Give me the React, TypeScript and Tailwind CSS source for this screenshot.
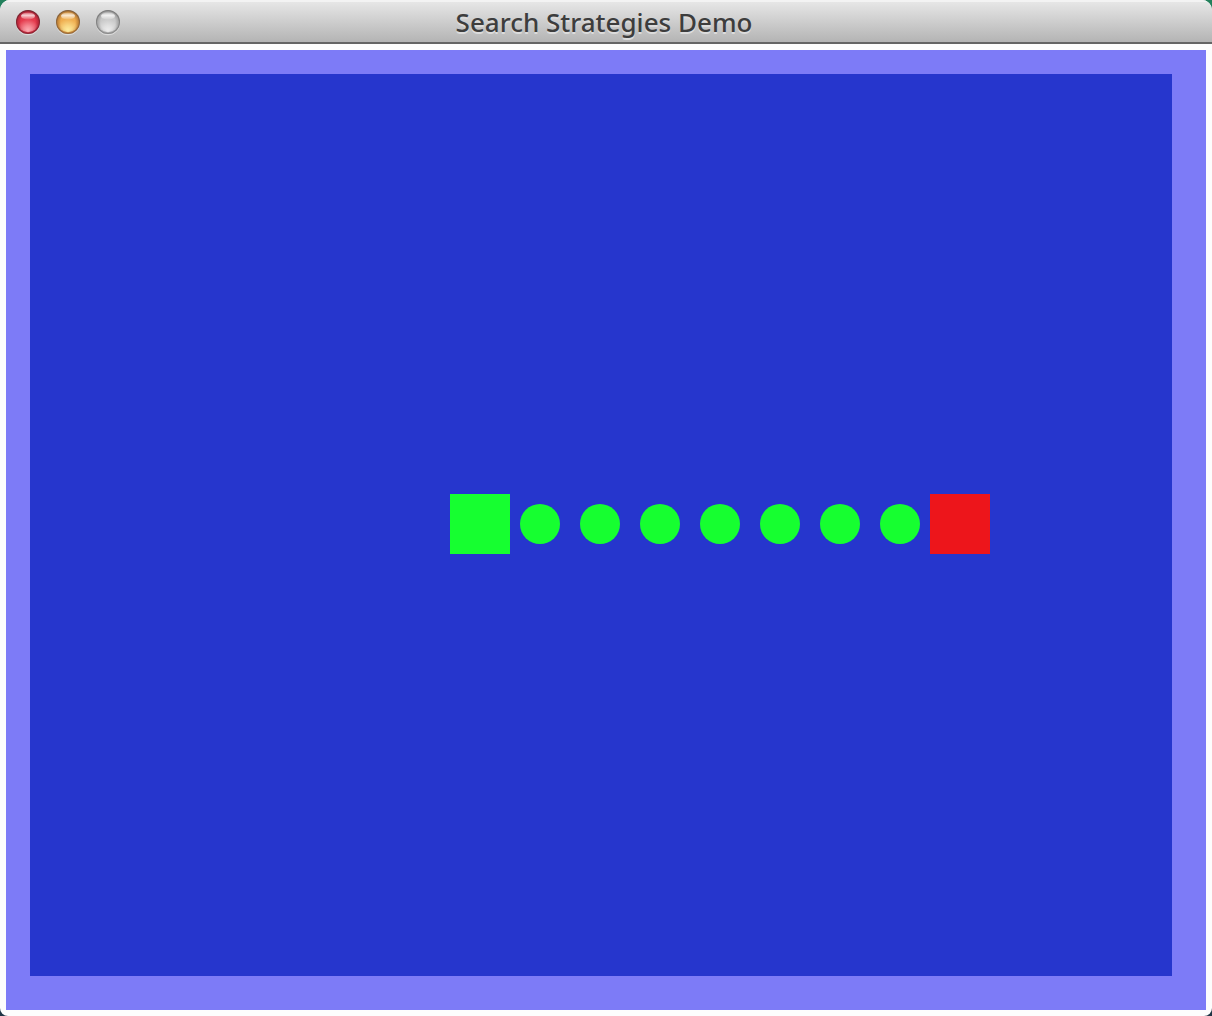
type Light = { id: string; label: string; rim: string; edge: string; mid: string; low: string };

const lights: Light[] = [
  { id: 'close', label: 'Close', rim: '#7a2430', edge: '#b8283b', mid: '#e53b4d', low: '#ffb9be' },
  { id: 'minimize', label: 'Minimize', rim: '#85603a', edge: '#c08339', mid: '#efae50', low: '#fff3a6' },
  { id: 'zoom', label: 'Zoom', rim: '#7c7c7c', edge: '#a6a6a6', mid: '#c9c9c9', low: '#f0f0f0' },
];

const pathCells = [0, 1, 2, 3, 4, 5, 6];

function WindowButton({ id, label, rim, edge, mid, low }: Light) {
  return (
    <button type="button" aria-label={label} className="block size-6">
      <svg viewBox="0 0 24 24" className="block size-6 overflow-visible" aria-hidden="true">
        <defs>
          <radialGradient id={`${id}-body`} cx="0.5" cy="0.52" r="0.5">
            <stop offset="0.6" stopColor={mid} />
            <stop offset="0.88" stopColor={edge} />
            <stop offset="1" stopColor={rim} />
          </radialGradient>
          <radialGradient id={`${id}-glow`} cx="0.5" cy="0.9" r="0.55">
            <stop offset="0" stopColor={low} stopOpacity="0.9" />
            <stop offset="0.4" stopColor={low} stopOpacity="0.6" />
            <stop offset="1" stopColor={low} stopOpacity="0" />
          </radialGradient>
          <linearGradient id={`${id}-shine`} x1="0" y1="0" x2="0" y2="1">
            <stop offset="0" stopColor="#ffffff" stopOpacity="0.2" />
            <stop offset="0.4" stopColor="#ffffff" stopOpacity="0.75" />
            <stop offset="1" stopColor="#ffffff" stopOpacity="0.1" />
          </linearGradient>
        </defs>
        <circle cx="12" cy="13.2" r="12" fill="#ffffff" opacity="0.45" />
        <circle cx="12" cy="12" r="12" fill={`url(#${id}-body)`} />
        <circle cx="12" cy="12" r="10.2" fill={`url(#${id}-glow)`} />
        <ellipse cx="12" cy="6" rx="7" ry="3.6" fill={`url(#${id}-shine)`} />
        <circle cx="12" cy="12" r="11.5" fill="none" stroke={rim} strokeWidth="1" opacity="0.5" />
      </svg>
    </button>
  );
}

export default function App() {
  return (
    <div className="min-h-screen bg-[linear-gradient(#23805c_0px,#23805c_50%,#1f3545_50%)] font-['Noto_Sans','Open_Sans',sans-serif]">
      <div className="flex min-h-screen flex-col overflow-hidden rounded-t-[10px] rounded-b-[8px] bg-[#fdfdfd]">
        <header className="grid h-11 grid-cols-[1fr_auto_1fr] items-center border-b-2 border-[#656565] bg-linear-to-b from-[#e9e9e9] to-[#b4b4b4] pr-5 pl-4 shadow-[inset_0_2px_0_#f3f3f3]">
          <div className="flex items-center gap-4 pt-0.5">
            {lights.map((light) => (
              <WindowButton key={light.id} {...light} />
            ))}
          </div>
          <h1 className="pt-0.5 text-[26px] leading-8 font-medium whitespace-nowrap text-[#3d3d3d] [text-shadow:0_2px_0_#dcdcdc]">
            Search Strategies Demo
          </h1>
        </header>
        <main className="flex flex-1 p-1.5">
          <div className="flex flex-1 bg-[#7d7bf7] pt-6 pr-[34px] pb-[34px] pl-6">
            <div className="grid flex-1 auto-rows-[60px] grid-cols-[repeat(19,60px)] bg-[#2636cd]">
              <div className="col-start-8 row-start-8 bg-[#16ff30]" />
              <div className="col-span-7 col-start-9 row-start-8 flex items-center justify-around">
                {pathCells.map((cell) => (
                  <div key={cell} className="size-10 rounded-full bg-[#16ff30]" />
                ))}
              </div>
              <div className="col-start-16 row-start-8 bg-[#ed151b]" />
            </div>
          </div>
        </main>
      </div>
    </div>
  );
}
